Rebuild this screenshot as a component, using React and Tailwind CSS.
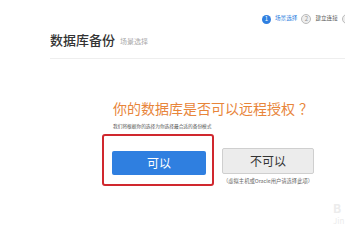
export default function App() {
  return (
    <div
      className="relative w-[345px] h-[249px] overflow-hidden bg-white text-[#333]"
      style={{ fontFamily: '"Noto Sans CJK SC", "Noto Sans", sans-serif' }}
    >
      {/* steps */}
      <div className="flex items-center h-[14px] mt-[12px] ml-[262px] w-[120px] whitespace-nowrap">
        <span className="flex shrink-0 items-center justify-center w-[9px] h-[9px] rounded-full bg-[#2f7fe0] text-white text-[6px] leading-none">
          1
        </span>
        <span className="ml-[4px] shrink-0 text-[5.6px] leading-none text-[#2f7fe0]">场景选择</span>
        <span className="ml-[4px] flex shrink-0 items-center justify-center w-[10px] h-[10px] rounded-full border border-[#bbb] bg-[#eee] text-[#999] text-[6px] leading-none">
          2
        </span>
        <span className="ml-[4px] shrink-0 text-[5.6px] leading-none text-[#555]">建立连接</span>
        <span className="ml-[4px] w-[10px] h-[10px] shrink-0 rounded-full border border-[#bbb] bg-[#eee]" />
      </div>

      {/* header */}
      <div className="flex items-end ml-[50px] mt-[4px] h-[16px]">
        <span className="text-[13px] leading-none font-medium text-[#333]">数据库备份</span>
        <span className="ml-[5px] text-[7px] leading-none text-[#aaa] mb-[1px]">场景选择</span>
      </div>
      <div className="ml-[50px] mt-[12px] h-px bg-[#eeeeee]" />

      {/* question */}
      <div className="ml-[113px] mt-[42px]">
        <div className="text-[14px] leading-none text-[#e8853a] whitespace-nowrap">
          你的数据库是否可以远程授权<span className="ml-[4px]">？</span>
        </div>
        <div className="mt-[9px] text-[4.7px] leading-none text-[#555] whitespace-nowrap">
          我们将根据你的选择为你选择最合适的备份模式
        </div>
      </div>

      {/* choices */}
      <div className="flex items-start ml-[102px] mt-[5px]">
        <div className="w-[112px] h-[52px] border-2 border-[#d0282e] rounded-[3px] pl-[8px] pt-[13px]">
          <button className="w-[94px] h-[24px] rounded-[2px] bg-[#2f7fe0] text-white text-[12px] leading-none">
            可以
          </button>
        </div>
        <div className="ml-[8px] mt-[14px] flex flex-col items-center">
          <button className="w-[92px] h-[26px] rounded-[2px] border border-[#cfcfcf] bg-[#ececec] text-[#333] text-[12px] leading-none">
            不可以
          </button>
          <div className="mt-[5px] text-[5.3px] leading-none text-[#666] whitespace-nowrap">
            （虚拟主机或Oracle用户请选择此项）
          </div>
        </div>
      </div>

      {/* watermark */}
      <div className="absolute left-[333px] top-[202px] text-[#ececec] leading-none">
        <div className="text-[12px] font-bold">B</div>
        <div className="mt-[3px] text-[8px]">Jin</div>
      </div>
    </div>
  );
}
